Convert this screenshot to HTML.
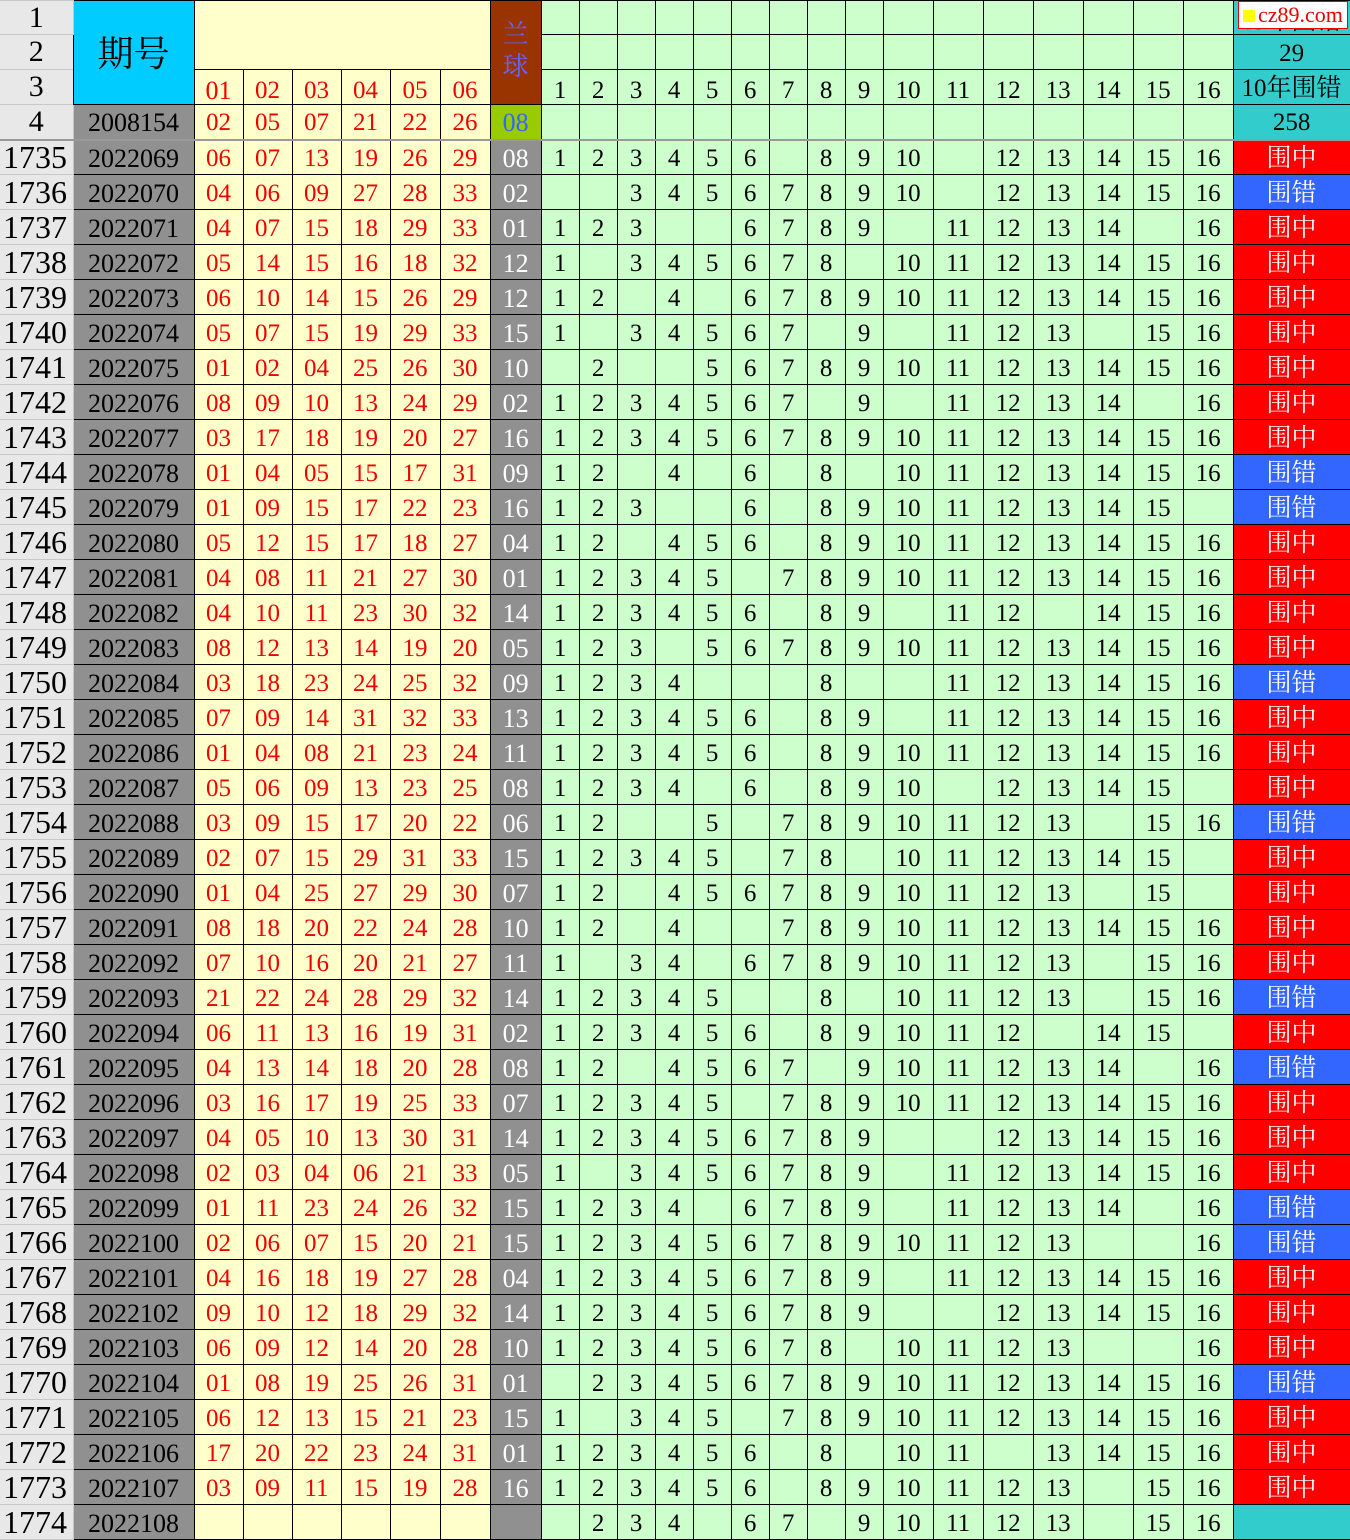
<!DOCTYPE html>
<html><head><meta charset="utf-8">
<style>
html,body{margin:0;padding:0;background:#fff;width:1350px;height:1539px;overflow:hidden}
table{border-collapse:collapse;table-layout:fixed;width:1350px;font-family:"Liberation Serif","Noto Serif CJK SC",serif;position:absolute;left:0;top:0}
td,th{border:1px solid #000;padding:3px 0 0 0;text-align:center;font-size:25px;font-weight:normal;line-height:24px;overflow:hidden;white-space:nowrap}
tr{height:35px}
th{background:#e8e8e8;border-color:#c8c8c8;font-size:32px;text-align:left;padding-left:3px;border-left:none;padding-top:0}
th.h{text-align:center;padding-left:0;font-size:30px}
td:nth-child(2){background:#909090;font-size:26px}
td.r{background:#ffffcc;color:#f00000}
td.b{background:#909090;color:#fff;font-size:26px}
td.g{background:#ccffcc;color:#000}
td.z{background:#ff0000;color:#fff}
td.c{background:#3366ff;color:#fff}
td.t{background:#33cccc;color:#000}
tr.d td:nth-child(n+3):nth-child(-n+8){background:#ffffcc;color:#f00000}
tr.d td:nth-child(9){background:#909090;color:#fff;font-size:26px}
tr.d td:nth-child(n+10):nth-child(-n+25){background:#ccffcc}
tr.s td,tr.s th{border-bottom:2px solid #999}
.wm{position:absolute;left:1238px;top:1px;width:108px;height:26px;background:#fff;border:1px solid #e00;color:#e00;font-family:"Liberation Serif",serif;font-size:22px;line-height:26px}
.wm i{display:inline-block;width:12px;height:12px;background:#ff0;margin:0 3px 0 4px;vertical-align:0px}
</style></head><body>
<table>
<colgroup><col style="width:73px"><col style="width:121px"><col style="width:49px"><col style="width:49px"><col style="width:49px"><col style="width:49px"><col style="width:50px"><col style="width:50px"><col style="width:51px"><col style="width:38px"><col style="width:38px"><col style="width:38px"><col style="width:38px"><col style="width:38px"><col style="width:38px"><col style="width:38px"><col style="width:38px"><col style="width:38px"><col style="width:50px"><col style="width:50px"><col style="width:50px"><col style="width:50px"><col style="width:50px"><col style="width:50px"><col style="width:50px"><col style="width:117px"></colgroup>
<tr style="height:34px"><th class="h">1</th><td rowspan="3" style="background:#00ccff;font-size:36px;line-height:40px;padding-top:2px">期号</td><td class="r" colspan="6" rowspan="2"></td><td rowspan="3" style="background:#993300;color:#6666ff;font-size:26px;line-height:32px;vertical-align:top;padding-top:18px">兰<br>球</td><td class="g"></td><td class="g"></td><td class="g"></td><td class="g"></td><td class="g"></td><td class="g"></td><td class="g"></td><td class="g"></td><td class="g"></td><td class="g"></td><td class="g"></td><td class="g"></td><td class="g"></td><td class="g"></td><td class="g"></td><td class="g"></td><td class="t" style="vertical-align:bottom">09年围错</td></tr>
<tr><th class="h">2</th><td class="g"></td><td class="g"></td><td class="g"></td><td class="g"></td><td class="g"></td><td class="g"></td><td class="g"></td><td class="g"></td><td class="g"></td><td class="g"></td><td class="g"></td><td class="g"></td><td class="g"></td><td class="g"></td><td class="g"></td><td class="g"></td><td class="t">29</td></tr>
<tr><th class="h">3</th><td class="r" style="padding-top:8px">01</td><td class="r" style="padding-top:8px">02</td><td class="r" style="padding-top:8px">03</td><td class="r" style="padding-top:8px">04</td><td class="r" style="padding-top:8px">05</td><td class="r" style="padding-top:8px">06</td><td class="g" style="padding-top:8px">1</td><td class="g" style="padding-top:8px">2</td><td class="g" style="padding-top:8px">3</td><td class="g" style="padding-top:8px">4</td><td class="g" style="padding-top:8px">5</td><td class="g" style="padding-top:8px">6</td><td class="g" style="padding-top:8px">7</td><td class="g" style="padding-top:8px">8</td><td class="g" style="padding-top:8px">9</td><td class="g" style="padding-top:8px">10</td><td class="g" style="padding-top:8px">11</td><td class="g" style="padding-top:8px">12</td><td class="g" style="padding-top:8px">13</td><td class="g" style="padding-top:8px">14</td><td class="g" style="padding-top:8px">15</td><td class="g" style="padding-top:8px">16</td><td class="t">10年围错</td></tr>
<tr class="s"><th class="h">4</th><td style="background:#909090;font-size:26px">2008154</td><td class="r">02</td><td class="r">05</td><td class="r">07</td><td class="r">21</td><td class="r">22</td><td class="r">26</td><td style="background:#99cc00;color:#3366ff;font-size:26px">08</td><td class="g"></td><td class="g"></td><td class="g"></td><td class="g"></td><td class="g"></td><td class="g"></td><td class="g"></td><td class="g"></td><td class="g"></td><td class="g"></td><td class="g"></td><td class="g"></td><td class="g"></td><td class="g"></td><td class="g"></td><td class="g"></td><td class="t">258</td></tr>
<tr class="d"><th>1735</th><td>2022069</td><td>06</td><td>07</td><td>13</td><td>19</td><td>26</td><td>29</td><td>08</td><td>1</td><td>2</td><td>3</td><td>4</td><td>5</td><td>6</td><td></td><td>8</td><td>9</td><td>10</td><td></td><td>12</td><td>13</td><td>14</td><td>15</td><td>16</td><td class="z">围中</td></tr>
<tr class="d"><th>1736</th><td>2022070</td><td>04</td><td>06</td><td>09</td><td>27</td><td>28</td><td>33</td><td>02</td><td></td><td></td><td>3</td><td>4</td><td>5</td><td>6</td><td>7</td><td>8</td><td>9</td><td>10</td><td></td><td>12</td><td>13</td><td>14</td><td>15</td><td>16</td><td class="c">围错</td></tr>
<tr class="d"><th>1737</th><td>2022071</td><td>04</td><td>07</td><td>15</td><td>18</td><td>29</td><td>33</td><td>01</td><td>1</td><td>2</td><td>3</td><td></td><td></td><td>6</td><td>7</td><td>8</td><td>9</td><td></td><td>11</td><td>12</td><td>13</td><td>14</td><td></td><td>16</td><td class="z">围中</td></tr>
<tr class="d"><th>1738</th><td>2022072</td><td>05</td><td>14</td><td>15</td><td>16</td><td>18</td><td>32</td><td>12</td><td>1</td><td></td><td>3</td><td>4</td><td>5</td><td>6</td><td>7</td><td>8</td><td></td><td>10</td><td>11</td><td>12</td><td>13</td><td>14</td><td>15</td><td>16</td><td class="z">围中</td></tr>
<tr class="d"><th>1739</th><td>2022073</td><td>06</td><td>10</td><td>14</td><td>15</td><td>26</td><td>29</td><td>12</td><td>1</td><td>2</td><td></td><td>4</td><td></td><td>6</td><td>7</td><td>8</td><td>9</td><td>10</td><td>11</td><td>12</td><td>13</td><td>14</td><td>15</td><td>16</td><td class="z">围中</td></tr>
<tr class="d"><th>1740</th><td>2022074</td><td>05</td><td>07</td><td>15</td><td>19</td><td>29</td><td>33</td><td>15</td><td>1</td><td></td><td>3</td><td>4</td><td>5</td><td>6</td><td>7</td><td></td><td>9</td><td></td><td>11</td><td>12</td><td>13</td><td></td><td>15</td><td>16</td><td class="z">围中</td></tr>
<tr class="d"><th>1741</th><td>2022075</td><td>01</td><td>02</td><td>04</td><td>25</td><td>26</td><td>30</td><td>10</td><td></td><td>2</td><td></td><td></td><td>5</td><td>6</td><td>7</td><td>8</td><td>9</td><td>10</td><td>11</td><td>12</td><td>13</td><td>14</td><td>15</td><td>16</td><td class="z">围中</td></tr>
<tr class="d"><th>1742</th><td>2022076</td><td>08</td><td>09</td><td>10</td><td>13</td><td>24</td><td>29</td><td>02</td><td>1</td><td>2</td><td>3</td><td>4</td><td>5</td><td>6</td><td>7</td><td></td><td>9</td><td></td><td>11</td><td>12</td><td>13</td><td>14</td><td></td><td>16</td><td class="z">围中</td></tr>
<tr class="d"><th>1743</th><td>2022077</td><td>03</td><td>17</td><td>18</td><td>19</td><td>20</td><td>27</td><td>16</td><td>1</td><td>2</td><td>3</td><td>4</td><td>5</td><td>6</td><td>7</td><td>8</td><td>9</td><td>10</td><td>11</td><td>12</td><td>13</td><td>14</td><td>15</td><td>16</td><td class="z">围中</td></tr>
<tr class="d"><th>1744</th><td>2022078</td><td>01</td><td>04</td><td>05</td><td>15</td><td>17</td><td>31</td><td>09</td><td>1</td><td>2</td><td></td><td>4</td><td></td><td>6</td><td></td><td>8</td><td></td><td>10</td><td>11</td><td>12</td><td>13</td><td>14</td><td>15</td><td>16</td><td class="c">围错</td></tr>
<tr class="d"><th>1745</th><td>2022079</td><td>01</td><td>09</td><td>15</td><td>17</td><td>22</td><td>23</td><td>16</td><td>1</td><td>2</td><td>3</td><td></td><td></td><td>6</td><td></td><td>8</td><td>9</td><td>10</td><td>11</td><td>12</td><td>13</td><td>14</td><td>15</td><td></td><td class="c">围错</td></tr>
<tr class="d"><th>1746</th><td>2022080</td><td>05</td><td>12</td><td>15</td><td>17</td><td>18</td><td>27</td><td>04</td><td>1</td><td>2</td><td></td><td>4</td><td>5</td><td>6</td><td></td><td>8</td><td>9</td><td>10</td><td>11</td><td>12</td><td>13</td><td>14</td><td>15</td><td>16</td><td class="z">围中</td></tr>
<tr class="d"><th>1747</th><td>2022081</td><td>04</td><td>08</td><td>11</td><td>21</td><td>27</td><td>30</td><td>01</td><td>1</td><td>2</td><td>3</td><td>4</td><td>5</td><td></td><td>7</td><td>8</td><td>9</td><td>10</td><td>11</td><td>12</td><td>13</td><td>14</td><td>15</td><td>16</td><td class="z">围中</td></tr>
<tr class="d"><th>1748</th><td>2022082</td><td>04</td><td>10</td><td>11</td><td>23</td><td>30</td><td>32</td><td>14</td><td>1</td><td>2</td><td>3</td><td>4</td><td>5</td><td>6</td><td></td><td>8</td><td>9</td><td></td><td>11</td><td>12</td><td></td><td>14</td><td>15</td><td>16</td><td class="z">围中</td></tr>
<tr class="d"><th>1749</th><td>2022083</td><td>08</td><td>12</td><td>13</td><td>14</td><td>19</td><td>20</td><td>05</td><td>1</td><td>2</td><td>3</td><td></td><td>5</td><td>6</td><td>7</td><td>8</td><td>9</td><td>10</td><td>11</td><td>12</td><td>13</td><td>14</td><td>15</td><td>16</td><td class="z">围中</td></tr>
<tr class="d"><th>1750</th><td>2022084</td><td>03</td><td>18</td><td>23</td><td>24</td><td>25</td><td>32</td><td>09</td><td>1</td><td>2</td><td>3</td><td>4</td><td></td><td></td><td></td><td>8</td><td></td><td></td><td>11</td><td>12</td><td>13</td><td>14</td><td>15</td><td>16</td><td class="c">围错</td></tr>
<tr class="d"><th>1751</th><td>2022085</td><td>07</td><td>09</td><td>14</td><td>31</td><td>32</td><td>33</td><td>13</td><td>1</td><td>2</td><td>3</td><td>4</td><td>5</td><td>6</td><td></td><td>8</td><td>9</td><td></td><td>11</td><td>12</td><td>13</td><td>14</td><td>15</td><td>16</td><td class="z">围中</td></tr>
<tr class="d"><th>1752</th><td>2022086</td><td>01</td><td>04</td><td>08</td><td>21</td><td>23</td><td>24</td><td>11</td><td>1</td><td>2</td><td>3</td><td>4</td><td>5</td><td>6</td><td></td><td>8</td><td>9</td><td>10</td><td>11</td><td>12</td><td>13</td><td>14</td><td>15</td><td>16</td><td class="z">围中</td></tr>
<tr class="d"><th>1753</th><td>2022087</td><td>05</td><td>06</td><td>09</td><td>13</td><td>23</td><td>25</td><td>08</td><td>1</td><td>2</td><td>3</td><td>4</td><td></td><td>6</td><td></td><td>8</td><td>9</td><td>10</td><td></td><td>12</td><td>13</td><td>14</td><td>15</td><td></td><td class="z">围中</td></tr>
<tr class="d"><th>1754</th><td>2022088</td><td>03</td><td>09</td><td>15</td><td>17</td><td>20</td><td>22</td><td>06</td><td>1</td><td>2</td><td></td><td></td><td>5</td><td></td><td>7</td><td>8</td><td>9</td><td>10</td><td>11</td><td>12</td><td>13</td><td></td><td>15</td><td>16</td><td class="c">围错</td></tr>
<tr class="d"><th>1755</th><td>2022089</td><td>02</td><td>07</td><td>15</td><td>29</td><td>31</td><td>33</td><td>15</td><td>1</td><td>2</td><td>3</td><td>4</td><td>5</td><td></td><td>7</td><td>8</td><td></td><td>10</td><td>11</td><td>12</td><td>13</td><td>14</td><td>15</td><td></td><td class="z">围中</td></tr>
<tr class="d"><th>1756</th><td>2022090</td><td>01</td><td>04</td><td>25</td><td>27</td><td>29</td><td>30</td><td>07</td><td>1</td><td>2</td><td></td><td>4</td><td>5</td><td>6</td><td>7</td><td>8</td><td>9</td><td>10</td><td>11</td><td>12</td><td>13</td><td></td><td>15</td><td></td><td class="z">围中</td></tr>
<tr class="d"><th>1757</th><td>2022091</td><td>08</td><td>18</td><td>20</td><td>22</td><td>24</td><td>28</td><td>10</td><td>1</td><td>2</td><td></td><td>4</td><td></td><td></td><td>7</td><td>8</td><td>9</td><td>10</td><td>11</td><td>12</td><td>13</td><td>14</td><td>15</td><td>16</td><td class="z">围中</td></tr>
<tr class="d"><th>1758</th><td>2022092</td><td>07</td><td>10</td><td>16</td><td>20</td><td>21</td><td>27</td><td>11</td><td>1</td><td></td><td>3</td><td>4</td><td></td><td>6</td><td>7</td><td>8</td><td>9</td><td>10</td><td>11</td><td>12</td><td>13</td><td></td><td>15</td><td>16</td><td class="z">围中</td></tr>
<tr class="d"><th>1759</th><td>2022093</td><td>21</td><td>22</td><td>24</td><td>28</td><td>29</td><td>32</td><td>14</td><td>1</td><td>2</td><td>3</td><td>4</td><td>5</td><td></td><td></td><td>8</td><td></td><td>10</td><td>11</td><td>12</td><td>13</td><td></td><td>15</td><td>16</td><td class="c">围错</td></tr>
<tr class="d"><th>1760</th><td>2022094</td><td>06</td><td>11</td><td>13</td><td>16</td><td>19</td><td>31</td><td>02</td><td>1</td><td>2</td><td>3</td><td>4</td><td>5</td><td>6</td><td></td><td>8</td><td>9</td><td>10</td><td>11</td><td>12</td><td></td><td>14</td><td>15</td><td></td><td class="z">围中</td></tr>
<tr class="d"><th>1761</th><td>2022095</td><td>04</td><td>13</td><td>14</td><td>18</td><td>20</td><td>28</td><td>08</td><td>1</td><td>2</td><td></td><td>4</td><td>5</td><td>6</td><td>7</td><td></td><td>9</td><td>10</td><td>11</td><td>12</td><td>13</td><td>14</td><td></td><td>16</td><td class="c">围错</td></tr>
<tr class="d"><th>1762</th><td>2022096</td><td>03</td><td>16</td><td>17</td><td>19</td><td>25</td><td>33</td><td>07</td><td>1</td><td>2</td><td>3</td><td>4</td><td>5</td><td></td><td>7</td><td>8</td><td>9</td><td>10</td><td>11</td><td>12</td><td>13</td><td>14</td><td>15</td><td>16</td><td class="z">围中</td></tr>
<tr class="d"><th>1763</th><td>2022097</td><td>04</td><td>05</td><td>10</td><td>13</td><td>30</td><td>31</td><td>14</td><td>1</td><td>2</td><td>3</td><td>4</td><td>5</td><td>6</td><td>7</td><td>8</td><td>9</td><td></td><td></td><td>12</td><td>13</td><td>14</td><td>15</td><td>16</td><td class="z">围中</td></tr>
<tr class="d"><th>1764</th><td>2022098</td><td>02</td><td>03</td><td>04</td><td>06</td><td>21</td><td>33</td><td>05</td><td>1</td><td></td><td>3</td><td>4</td><td>5</td><td>6</td><td>7</td><td>8</td><td>9</td><td></td><td>11</td><td>12</td><td>13</td><td>14</td><td>15</td><td>16</td><td class="z">围中</td></tr>
<tr class="d"><th>1765</th><td>2022099</td><td>01</td><td>11</td><td>23</td><td>24</td><td>26</td><td>32</td><td>15</td><td>1</td><td>2</td><td>3</td><td>4</td><td></td><td>6</td><td>7</td><td>8</td><td>9</td><td></td><td>11</td><td>12</td><td>13</td><td>14</td><td></td><td>16</td><td class="c">围错</td></tr>
<tr class="d"><th>1766</th><td>2022100</td><td>02</td><td>06</td><td>07</td><td>15</td><td>20</td><td>21</td><td>15</td><td>1</td><td>2</td><td>3</td><td>4</td><td>5</td><td>6</td><td>7</td><td>8</td><td>9</td><td>10</td><td>11</td><td>12</td><td>13</td><td></td><td></td><td>16</td><td class="c">围错</td></tr>
<tr class="d"><th>1767</th><td>2022101</td><td>04</td><td>16</td><td>18</td><td>19</td><td>27</td><td>28</td><td>04</td><td>1</td><td>2</td><td>3</td><td>4</td><td>5</td><td>6</td><td>7</td><td>8</td><td>9</td><td></td><td>11</td><td>12</td><td>13</td><td>14</td><td>15</td><td>16</td><td class="z">围中</td></tr>
<tr class="d"><th>1768</th><td>2022102</td><td>09</td><td>10</td><td>12</td><td>18</td><td>29</td><td>32</td><td>14</td><td>1</td><td>2</td><td>3</td><td>4</td><td>5</td><td>6</td><td>7</td><td>8</td><td>9</td><td></td><td></td><td>12</td><td>13</td><td>14</td><td>15</td><td>16</td><td class="z">围中</td></tr>
<tr class="d"><th>1769</th><td>2022103</td><td>06</td><td>09</td><td>12</td><td>14</td><td>20</td><td>28</td><td>10</td><td>1</td><td>2</td><td>3</td><td>4</td><td>5</td><td>6</td><td>7</td><td>8</td><td></td><td>10</td><td>11</td><td>12</td><td>13</td><td></td><td></td><td>16</td><td class="z">围中</td></tr>
<tr class="d"><th>1770</th><td>2022104</td><td>01</td><td>08</td><td>19</td><td>25</td><td>26</td><td>31</td><td>01</td><td></td><td>2</td><td>3</td><td>4</td><td>5</td><td>6</td><td>7</td><td>8</td><td>9</td><td>10</td><td>11</td><td>12</td><td>13</td><td>14</td><td>15</td><td>16</td><td class="c">围错</td></tr>
<tr class="d"><th>1771</th><td>2022105</td><td>06</td><td>12</td><td>13</td><td>15</td><td>21</td><td>23</td><td>15</td><td>1</td><td></td><td>3</td><td>4</td><td>5</td><td></td><td>7</td><td>8</td><td>9</td><td>10</td><td>11</td><td>12</td><td>13</td><td>14</td><td>15</td><td>16</td><td class="z">围中</td></tr>
<tr class="d"><th>1772</th><td>2022106</td><td>17</td><td>20</td><td>22</td><td>23</td><td>24</td><td>31</td><td>01</td><td>1</td><td>2</td><td>3</td><td>4</td><td>5</td><td>6</td><td></td><td>8</td><td></td><td>10</td><td>11</td><td></td><td>13</td><td>14</td><td>15</td><td>16</td><td class="z">围中</td></tr>
<tr class="d"><th>1773</th><td>2022107</td><td>03</td><td>09</td><td>11</td><td>15</td><td>19</td><td>28</td><td>16</td><td>1</td><td>2</td><td>3</td><td>4</td><td>5</td><td>6</td><td></td><td>8</td><td>9</td><td>10</td><td>11</td><td>12</td><td>13</td><td></td><td>15</td><td>16</td><td class="z">围中</td></tr>
<tr class="d"><th>1774</th><td>2022108</td><td></td><td></td><td></td><td></td><td></td><td></td><td></td><td></td><td>2</td><td>3</td><td>4</td><td></td><td>6</td><td>7</td><td></td><td>9</td><td>10</td><td>11</td><td>12</td><td>13</td><td></td><td>15</td><td>16</td><td class="t"></td></tr>
</table>
<div class="wm"><i></i>cz89.com</div>
</body></html>
